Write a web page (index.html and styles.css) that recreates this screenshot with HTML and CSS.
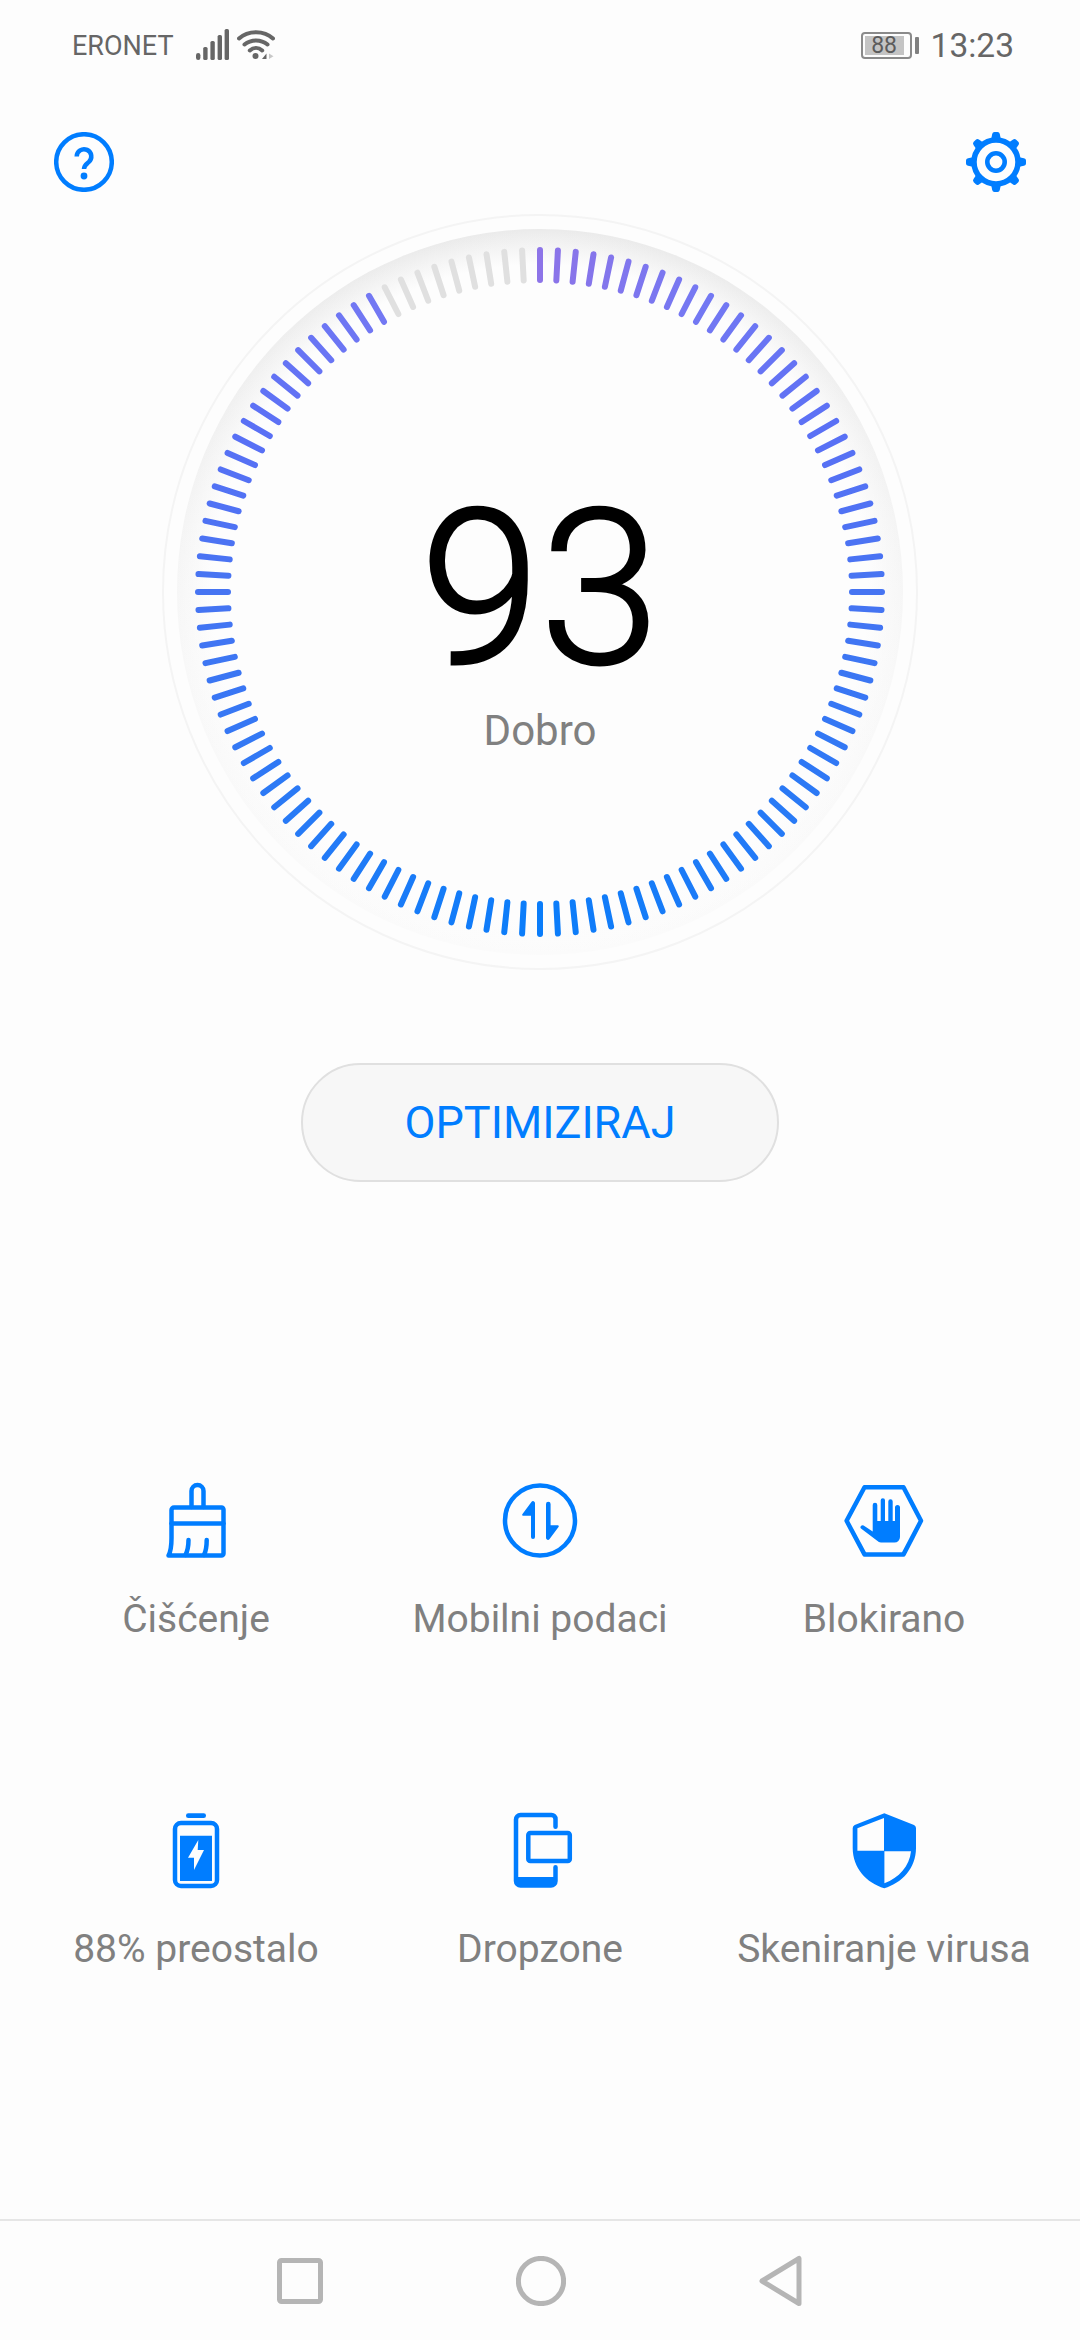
FILE: index.html
```html
<!DOCTYPE html>
<html lang="hr">
  <head>
    <meta charset="UTF-8" />
    <meta name="viewport" content="width=device-width, initial-scale=1.0" />
    <title>Upravitelj telefona</title>
    <link rel="stylesheet" href="styles.css">
  </head>
  <body>
    <div class="status-bar">
      <div class="status-left">
        <span class="carrier">ERONET</span>
        <svg class="signal" viewBox="0 0 34 32" width="34" height="32">
          <rect x="0" y="24" width="4.4" height="7" rx="2.2" />
          <rect x="7.2" y="18" width="4.4" height="13" rx="1.6" />
          <rect x="14.4" y="12" width="4.4" height="19" rx="1.6" />
          <rect x="21.6" y="6" width="4.4" height="25" rx="1.6" />
          <rect x="28.6" y="0" width="4.4" height="31" rx="1.6" />
        </svg>
        <svg class="wifi" viewBox="0 0 38 32" width="38" height="32">
          <path d="M2 9.5C11 1 27 1 36 9.5" />
          <path d="M7.5 15.5C14 10 24 10 30.5 15.5" />
          <path d="M12.8 21.5C16.5 18.2 21.5 18.2 25.2 21.5" />
          <circle cx="18.5" cy="27" r="3" class="wifi-dot" />
          <path d="M29.5 24.5V30H25Z" class="wifi-dot" />
          <path d="M32 24.5V30L36.5 27.2Z" class="wifi-off" />
        </svg>
      </div>
      <div class="status-right">
        <div class="battery"><span class="battery-fill">88</span></div>
        <span class="clock">13:23</span>
      </div>
    </div>

    <div class="toolbar">
      <svg class="icon-btn" viewBox="0 0 60 60" width="60" height="60">
        <circle cx="30" cy="30" r="27.8" />
        <path d="M22.7 24.5a7.3 7.3 0 1 1 12 5.6c-3 2.5-4.7 3.4-4.7 7" />
        <circle cx="30" cy="44" r="3.4" class="solid" />
      </svg>
      <svg class="icon-btn" viewBox="0 0 60 60" width="60" height="60">
        <circle cx="30" cy="30" r="22" stroke-width="5.5" />
        <circle cx="30" cy="30" r="8.7" stroke-width="4.6" />
        <g class="solid">
          <path d="M25 8 26.2 2Q26.6 0 28.5 0H31.5Q33.4 0 33.8 2L35 8Z" />
          <path d="M25 8 26.2 2Q26.6 0 28.5 0H31.5Q33.4 0 33.8 2L35 8Z" transform="rotate(45 30 30)" />
          <path d="M25 8 26.2 2Q26.6 0 28.5 0H31.5Q33.4 0 33.8 2L35 8Z" transform="rotate(90 30 30)" />
          <path d="M25 8 26.2 2Q26.6 0 28.5 0H31.5Q33.4 0 33.8 2L35 8Z" transform="rotate(135 30 30)" />
          <path d="M25 8 26.2 2Q26.6 0 28.5 0H31.5Q33.4 0 33.8 2L35 8Z" transform="rotate(180 30 30)" />
          <path d="M25 8 26.2 2Q26.6 0 28.5 0H31.5Q33.4 0 33.8 2L35 8Z" transform="rotate(225 30 30)" />
          <path d="M25 8 26.2 2Q26.6 0 28.5 0H31.5Q33.4 0 33.8 2L35 8Z" transform="rotate(270 30 30)" />
          <path d="M25 8 26.2 2Q26.6 0 28.5 0H31.5Q33.4 0 33.8 2L35 8Z" transform="rotate(315 30 30)" />
        </g>
      </svg>
    </div>

    <div class="dial">
      <div class="dial-ring"></div>
      <div class="dial-band"></div>
      <div class="dial-fade"></div>
      <svg id="ticks" class="dial-ticks" viewBox="0 0 756 756" width="756" height="756"></svg>
      <div class="dial-score">
        <span class="score">93</span>
        <span class="score-label">Dobro</span>
      </div>
    </div>

    <button class="optimize" type="button">OPTIMIZIRAJ</button>

    <div class="tools">
      <div class="tool">
        <svg class="tool-icon" viewBox="0 0 80 80" width="80" height="80">
          <path d="M35.5 27V11a6 6 0 0 1 12 0V27" />
          <path d="M18 27.5H65.5a2 2 0 0 1 2 2V73.5a2 2 0 0 1-2 2H12.5C15 71 15.5 65 15.5 58V30a2.5 2.5 0 0 1 2.5-2.5Z" />
          <path d="M15.5 43.5H67.5" />
          <path d="M32.5 60C32.5 66 31.5 71 29.5 75" />
          <path d="M50.7 60C50.7 66 50 71 48 75" />
        </svg>
        <span class="tool-label">Čišćenje</span>
      </div>
      <div class="tool">
        <svg class="tool-icon" viewBox="0 0 80 80" width="80" height="80">
          <circle cx="40" cy="40.5" r="35" />
          <path class="solid" d="M35 23a2 2 0 0 0-3.4-1.3L22.5 34a1 1 0 0 0 .8 1.7H31V57a2 2 0 0 0 4 0Z" />
          <path class="solid" d="M46 58a2 2 0 0 0 3.4 1.3L58.5 47a1 1 0 0 0-.8-1.7H50.6V24a2.3 2.3 0 0 0-4.6 0Z" />
        </svg>
        <span class="tool-label">Mobilni podaci</span>
      </div>
      <div class="tool">
        <svg class="tool-icon" viewBox="0 0 80 80" width="80" height="80">
          <path d="M20.5 7.3H59.5L77 40.8 59.5 74.4H20.5L2.6 40.8Z" />
          <path class="solid" d="M28.7 25a2.3 2.3 0 0 1 4.6 0V41H36.7V20.3a2.15 2.15 0 0 1 4.3 0V41H44.3V21.5a2.2 2.2 0 0 1 4.4 0V41H51V27.4a2.5 2.5 0 0 1 5 0V57a5.5 5.5 0 0 1-5.5 5.5H37a5 5 0 0 1-3.8-1.7L17 48.6a2 2 0 0 1 2.6-3L28.7 51.5Z" />
        </svg>
        <span class="tool-label">Blokirano</span>
      </div>
      <div class="tool">
        <svg class="tool-icon" viewBox="0 0 80 80" width="80" height="80">
          <rect class="solid" x="30" y="3.3" width="20" height="4.7" rx="2.3" />
          <rect x="19" y="13" width="42" height="63" rx="6" />
          <path class="solid" fill-rule="evenodd" d="M24 25.7H56V71H24ZM42.3 30 32 47.7H38V60L48 40H41.7Z" />
        </svg>
        <span class="tool-label">88% preostalo</span>
      </div>
      <div class="tool">
        <svg class="tool-icon" viewBox="0 0 80 80" width="80" height="80">
          <path d="M55.5 16.7V9a4 4 0 0 0-4-4H20.5a4.5 4.5 0 0 0-4.5 4.5V71a4.5 4.5 0 0 0 4.5 4.5H51a4.5 4.5 0 0 0 4.5-4.5V57.3" />
          <path class="solid" d="M16 67H55.5V72a5 5 0 0 1-5 5H21a5 5 0 0 1-5-5Z" />
          <rect x="28.3" y="23" width="41.5" height="28" rx="2" />
        </svg>
        <span class="tool-label">Dropzone</span>
      </div>
      <div class="tool">
        <svg class="tool-icon" viewBox="0 0 80 80" width="80" height="80">
          <path class="solid" fill-rule="evenodd" d="M40.3 3.3 70 15a3.5 3.5 0 0 1 2 3V38C72 58 58 73 40.3 78.3 22.6 73 8.7 58 8.7 38V18a3.5 3.5 0 0 1 2-3ZM40 8 13.4 18.3V40.7H40ZM40.4 41.3V73.3C55 68 65.5 56 67 41.3Z" />
        </svg>
        <span class="tool-label">Skeniranje virusa</span>
      </div>
    </div>

    <div class="nav-bar">
      <svg class="nav-icon" viewBox="0 0 46 46" width="46" height="46">
        <rect x="2.5" y="2.5" width="41" height="41" rx="2" />
      </svg>
      <svg class="nav-icon" viewBox="0 0 50 50" width="50" height="50">
        <circle cx="25" cy="25" r="22.6" />
      </svg>
      <svg class="nav-icon" viewBox="0 0 44 52" width="44" height="52">
        <path d="M40 3.5V48.5L3 26Z" />
      </svg>
    </div>

    <script src="script.js"></script>
  </body>
</html>
```

FILE: styles.css
```css
/* General Reset */
* {
  margin: 0;
  padding: 0;
  box-sizing: border-box;
}

body {
  font-family: Roboto, 'Liberation Sans', sans-serif;
  width: 1080px;
  height: 2340px;
  overflow: hidden;
  background-color: #fdfdfd;
  display: flex;
  flex-direction: column;
  align-items: center;
}

/* Status bar */
.status-bar {
  width: 100%;
  height: 90px;
  padding: 0 66px 0 72px;
  display: flex;
  justify-content: space-between;
  align-items: center;
  color: #666;
}

.status-left,
.status-right {
  display: flex;
  align-items: center;
}

.carrier {
  font-size: 27px;
  width: 124px;
  padding-top: 2px;
}

.signal {
  fill: #666;
  margin-right: 7px;
}

.wifi {
  fill: none;
  stroke: #666;
  stroke-width: 4;
  stroke-linecap: round;
}

.wifi-dot {
  fill: #666;
  stroke: none;
}

.wifi-off {
  fill: #c8c8c8;
  stroke: none;
}

.battery {
  position: relative;
  width: 51px;
  height: 27px;
  padding: 2px;
  border: 2px solid #8a8a8a;
  border-radius: 4px;
  margin-right: 19px;
}

.battery::after {
  content: '';
  position: absolute;
  top: 3px;
  right: -9px;
  width: 4px;
  height: 17px;
  border-radius: 1px;
  background-color: #808080;
}

.battery-fill {
  display: block;
  width: 39px;
  height: 100%;
  background-color: #c4c4c4;
  font-size: 23px;
  line-height: 19px;
  text-align: center;
  color: #5c5c5c;
}

.clock {
  font-size: 33.5px;
}

/* Help and settings */
.toolbar {
  width: 100%;
  padding: 42px 54px 22px;
  display: flex;
  justify-content: space-between;
}

.icon-btn {
  fill: none;
  stroke: #007dff;
  stroke-width: 4.5;
}

.icon-btn .solid {
  fill: #007dff;
  stroke: none;
}

/* Score dial */
.dial {
  width: 756px;
  height: 756px;
  display: grid;
  place-items: center;
}

.dial > * {
  grid-area: 1 / 1;
}

.dial-ring {
  width: 756px;
  height: 756px;
  border-radius: 50%;
  border: 2px solid #f4f4f4;
}

.dial-band {
  width: 726px;
  height: 726px;
  border-radius: 50%;
  background: linear-gradient(#eaeaea, #f4f4f4 40%, #f8f8f8 60%, #fbfbfb);
}

.dial-fade {
  width: 728px;
  height: 728px;
  border-radius: 50%;
  background: radial-gradient(circle closest-side, #fdfdfd 90%, rgba(253, 253, 253, 0) 100%);
}

.dial-score {
  display: flex;
  flex-direction: column;
  align-items: center;
  padding-top: 50px;
}

.score {
  font-size: 216px;
  font-weight: 300;
  line-height: 222px;
  color: #000;
  -webkit-text-stroke: 3px #000;
}

.score-label {
  font-size: 42px;
  line-height: 50px;
  margin-top: 5px;
  color: #808080;
}

/* Optimize button */
.optimize {
  width: 478px;
  height: 119px;
  margin-top: 93px;
  border: 2px solid #e0e0e0;
  border-radius: 60px;
  background-color: #f7f7f7;
  font-family: inherit;
  font-size: 45px;
  color: #007dff;
}

/* Tool grid */
.tools {
  width: 1032px;
  margin-top: 298px;
  display: grid;
  grid-template-columns: repeat(3, 344px);
  grid-auto-rows: 330px;
}

.tool {
  display: flex;
  flex-direction: column;
  align-items: center;
}

.tool-icon {
  fill: none;
  stroke: #007dff;
  stroke-width: 4.5;
  stroke-linejoin: round;
  stroke-linecap: round;
}

.tool-icon .solid {
  fill: #007dff;
  stroke: none;
}

.tool-label {
  margin-top: 37px;
  font-size: 39px;
  line-height: 44px;
  white-space: nowrap;
  color: #808080;
}

/* Navigation bar */
.nav-bar {
  width: 100%;
  height: 121px;
  margin-top: auto;
  padding: 0 277px 0 277px;
  border-top: 2px solid #e6e6e6;
  display: flex;
  justify-content: space-between;
  align-items: center;
}

.nav-icon {
  fill: none;
  stroke: #b5b5b5;
  stroke-width: 5;
  stroke-linejoin: round;
}
```

FILE: script.js
```js
window.addEventListener('load', function () {
  var svg = document.getElementById('ticks');
  var total = 120;
  var greyFrom = 111; // 93% of the dial is lit

  // colours by distance from the top of the dial, in degrees
  var stops = [
    [0, [141, 116, 232]],
    [30, [115, 120, 243]],
    [60, [90, 112, 245]],
    [90, [70, 116, 242]],
    [135, [38, 122, 246]],
    [180, [10, 125, 250]],
  ];

  function tickColor(deg) {
    var d = deg > 180 ? 360 - deg : deg;
    for (var i = 1; i < stops.length; i++) {
      if (d <= stops[i][0]) {
        var a = stops[i - 1];
        var b = stops[i];
        var t = (d - a[0]) / (b[0] - a[0]);
        var c = a[1].map(function (v, k) {
          return Math.round(v + (b[1][k] - v) * t);
        });
        return 'rgb(' + c.join(',') + ')';
      }
    }
  }

  for (var i = 0; i < total; i++) {
    var deg = i * 3;
    var line = document.createElementNS('http://www.w3.org/2000/svg', 'line');
    line.setAttribute('x1', 378);
    line.setAttribute('x2', 378);
    line.setAttribute('y1', 36);
    line.setAttribute('y2', 66);
    line.setAttribute('stroke-width', 6);
    line.setAttribute('stroke-linecap', 'round');
    line.setAttribute('transform', 'rotate(' + deg + ' 378 378)');
    line.setAttribute('stroke', i >= greyFrom ? '#e0e0e0' : tickColor(deg));
    svg.appendChild(line);
  }
});
```
